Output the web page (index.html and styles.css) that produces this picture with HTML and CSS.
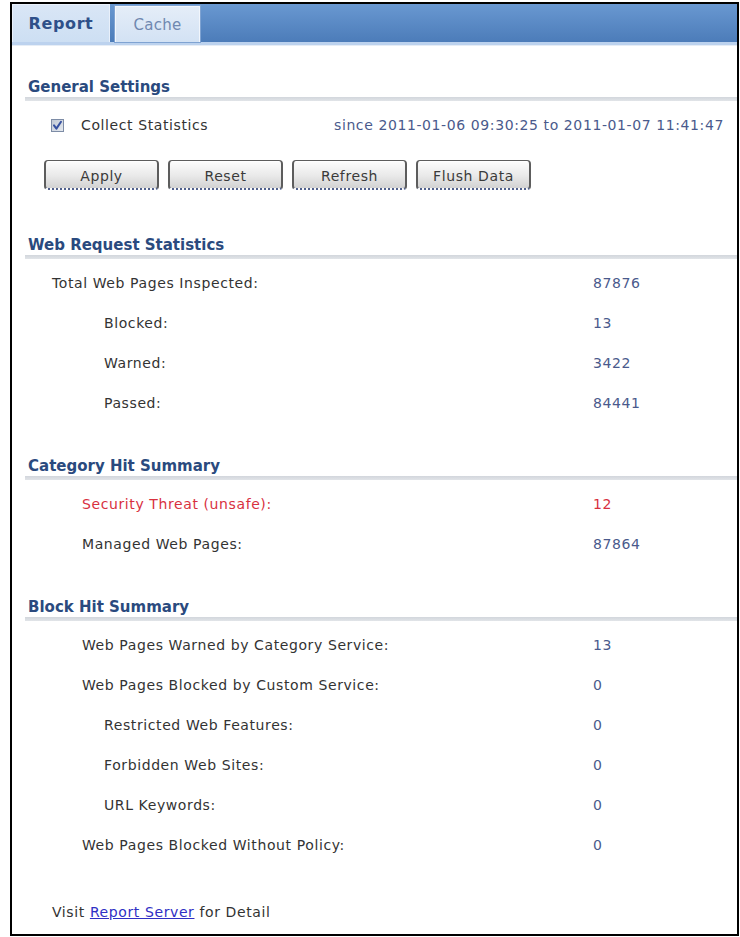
FILE: index.html
```html
<!DOCTYPE html>
<html>
<head>
<meta charset="utf-8">
<link rel="stylesheet" href="styles.css">
</head>
<body>
<div class="frame">
  <div class="tabbar">
    <div class="tab tab-active">Report</div>
    <div class="tab tab-idle">Cache</div>
  </div>
  <div class="stripe"></div>

  <div class="section sec-first">
    <div class="sec-title">General Settings</div>
    <div class="sec-bar"></div>
  </div>
  <div class="row row-check">
    <div class="check-label">
      <svg class="checkbox" width="13" height="13" viewBox="0 0 13 13">
        <defs>
          <linearGradient id="cbg" x1="0" y1="0" x2="1" y2="1">
            <stop offset="0" stop-color="#bfc7d3"/>
            <stop offset="1" stop-color="#e6eaf0"/>
          </linearGradient>
        </defs>
        <rect x="0.5" y="0.5" width="12" height="12" fill="url(#cbg)" stroke="#7d8ca6"/>
        <path d="M3 6.3 L5.4 9.6 L10 2.8" fill="none" stroke="#3550a0" stroke-width="2" stroke-linecap="round" stroke-linejoin="round"/>
      </svg>
      <span>Collect Statistics</span>
    </div>
    <div class="since">since 2011-01-06 09:30:25 to 2011-01-07 11:41:47</div>
  </div>
  <div class="buttons">
    <button class="btn">Apply</button>
    <button class="btn">Reset</button>
    <button class="btn">Refresh</button>
    <button class="btn">Flush Data</button>
  </div>

  <div class="section sec-second">
    <div class="sec-title">Web Request Statistics</div>
    <div class="sec-bar"></div>
  </div>
  <div class="rows">
    <div class="row"><div class="lbl lv-a">Total Web Pages Inspected:</div><div class="val">87876</div></div>
    <div class="row"><div class="lbl lv-2">Blocked:</div><div class="val">13</div></div>
    <div class="row"><div class="lbl lv-2">Warned:</div><div class="val">3422</div></div>
    <div class="row"><div class="lbl lv-2">Passed:</div><div class="val">84441</div></div>
  </div>

  <div class="section sec-third">
    <div class="sec-title">Category Hit Summary</div>
    <div class="sec-bar"></div>
  </div>
  <div class="rows">
    <div class="row red"><div class="lbl lv-1">Security Threat (unsafe):</div><div class="val">12</div></div>
    <div class="row"><div class="lbl lv-1">Managed Web Pages:</div><div class="val">87864</div></div>
  </div>

  <div class="section sec-fourth">
    <div class="sec-title">Block Hit Summary</div>
    <div class="sec-bar"></div>
  </div>
  <div class="rows">
    <div class="row"><div class="lbl lv-1">Web Pages Warned by Category Service:</div><div class="val">13</div></div>
    <div class="row"><div class="lbl lv-1">Web Pages Blocked by Custom Service:</div><div class="val">0</div></div>
    <div class="row"><div class="lbl lv-2">Restricted Web Features:</div><div class="val">0</div></div>
    <div class="row"><div class="lbl lv-2">Forbidden Web Sites:</div><div class="val">0</div></div>
    <div class="row"><div class="lbl lv-2">URL Keywords:</div><div class="val">0</div></div>
    <div class="row"><div class="lbl lv-1">Web Pages Blocked Without Policy:</div><div class="val">0</div></div>
  </div>

  <div class="footer">Visit <a href="#" class="link">Report Server</a> for Detail</div>
</div>
</body>
</html>
```

FILE: styles.css
```css
html, body {
  margin: 0;
  padding: 0;
  background: #ffffff;
}
body {
  font-family: "DejaVu Sans", sans-serif;
  font-size: 14px;
  letter-spacing: 0.6px;
  color: #333333;
}
.frame {
  box-sizing: border-box;
  margin: 2px 1px 0 10px;
  height: 934px;
  border: 2px solid #000000;
  background: #ffffff;
  overflow: hidden;
}
.tabbar {
  height: 38px;
  display: flex;
  align-items: flex-end;
  gap: 5px;
  background: linear-gradient(#6998d1, #4c7cb9);
}
.tab {
  box-sizing: border-box;
  display: flex;
  align-items: center;
  justify-content: center;
  letter-spacing: 0;
}
.tab-active {
  width: 98px;
  height: 38px;
  background: linear-gradient(#d9e6f6, #cddff3);
  border: 1px solid #e9f0fa;
  border-bottom: none;
  color: #2f5089;
  font-weight: bold;
  font-size: 16px;
  letter-spacing: 0.6px;
}
.tab-idle {
  width: 85px;
  height: 36px;
  background: linear-gradient(#e4edf8, #d3e2f4);
  border: 1px solid #f2f6fc;
  border-bottom: none;
  box-shadow: 0 0 0 1px #7fa3d2;
  color: #7088b0;
  font-size: 15px;
  letter-spacing: 0.3px;
}
.stripe {
  height: 3px;
  background: #bcd2ee;
  border-bottom: 1px solid #e6edf6;
}
.section {
  margin-left: 13px;
}
.sec-first { margin-top: 32px; }
.sec-second { margin-top: 46px; }
.sec-third { margin-top: 34px; }
.sec-fourth { margin-top: 34px; }
.sec-title {
  padding-left: 3px;
  height: 18px;
  line-height: 18px;
  font-size: 15px;
  font-weight: bold;
  letter-spacing: 0;
  color: #2a4a7e;
}
.sec-bar {
  margin-top: 1px;
  height: 4px;
  background: linear-gradient(#d2d6dc, #e1e4e8);
  margin-bottom: 4px;
}
.row {
  height: 40px;
  display: grid;
  grid-template-columns: 581px 1fr;
  align-items: center;
}
.row-check {
  grid-template-columns: 322px 1fr;
}
.check-label {
  display: flex;
  align-items: center;
  padding-left: 39px;
}
.checkbox {
  display: block;
  margin-right: 17px;
}
.since, .val {
  color: #4a5a8c;
}
.lbl.lv-a { padding-left: 40px; }
.lbl.lv-1 { padding-left: 70px; }
.lbl.lv-2 { padding-left: 92px; }
.red .lbl, .red .val { color: #d8313f; }
.buttons {
  display: flex;
  gap: 9px;
  padding-left: 32px;
  margin-top: 15px;
}
.btn {
  box-sizing: border-box;
  width: 115px;
  height: 30px;
  padding: 3px 0 0 0;
  font-family: inherit;
  font-size: 14px;
  letter-spacing: 0.6px;
  color: #3a3a3a;
  background: linear-gradient(#fdfdfd, #e9e9e9 55%, #d2d2d2);
  border: 1px solid #5d5d5d;
  border-left-width: 2px;
  border-right-width: 2px;
  border-radius: 4px;
  border-bottom: 2px dotted #50608c;
  box-shadow: inset 0 1px 0 #ffffff;
}
.footer {
  margin-top: 38px;
  padding-left: 40px;
  line-height: 18px;
  color: #333333;
}
.link {
  color: #2f2fc4;
  text-decoration: underline;
}
```
